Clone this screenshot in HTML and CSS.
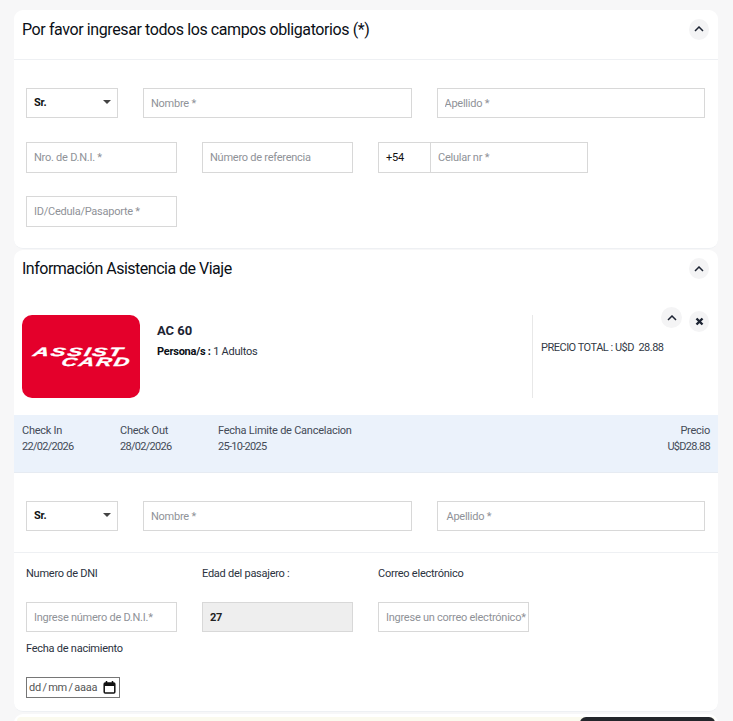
FILE: index.html
```html
<!DOCTYPE html>
<html lang="es">
<head>
<meta charset="utf-8">
<title>Datos del pasajero</title>
<link rel="stylesheet" href="styles.css">
</head>
<body>
<main class="page">
  <section class="card card-first">
    <header class="card-head head-line">
      <h2>Por favor ingresar todos los campos obligatorios (*)</h2>
      <button class="round" type="button" aria-label="Contraer"><svg width="10" height="6" viewBox="0 0 10 6"><path d="M1 5l4-4 4 4" fill="none" stroke="#1d2433" stroke-width="1.5"/></svg></button>
    </header>
    <div class="form">
      <div class="row row-name">
        <div class="select"><span>Sr.</span><i class="caret"></i></div>
        <input class="field" placeholder="Nombre *">
        <input class="field" placeholder="Apellido *">
      </div>
      <div class="row row-three">
        <input class="field tall" placeholder="Nro. de D.N.I. *">
        <input class="field tall" placeholder="Número de referencia">
        <div class="phone">
          <span class="prefix">+54</span>
          <input class="phone-input" placeholder="Celular nr *">
        </div>
      </div>
      <div class="row row-three">
        <input class="field tall" placeholder="ID/Cedula/Pasaporte *">
      </div>
    </div>
  </section>

  <section class="card card-second">
    <header class="card-head">
      <h2>Información Asistencia de Viaje</h2>
      <button class="round" type="button" aria-label="Contraer"><svg width="10" height="6" viewBox="0 0 10 6"><path d="M1 5l4-4 4 4" fill="none" stroke="#1d2433" stroke-width="1.5"/></svg></button>
    </header>
    <div class="product">
      <div class="logo"><span class="logo-a">ASSIST</span><span class="logo-b">CARD</span></div>
      <div class="product-info">
        <h3>AC 60</h3>
        <p><b>Persona/s :</b> 1 Adultos</p>
      </div>
      <div class="product-side">
        <div class="side-actions">
          <button class="round up" type="button" aria-label="Contraer"><svg width="10" height="6" viewBox="0 0 10 6"><path d="M1 5l4-4 4 4" fill="none" stroke="#1d2433" stroke-width="1.5"/></svg></button>
          <button class="round" type="button" aria-label="Quitar"><svg width="9" height="9" viewBox="0 0 9 9"><path d="M1.5 1.5l6 6M7.5 1.5l-6 6" fill="none" stroke="#1d2433" stroke-width="2.4"/></svg></button>
        </div>
        <p class="total">PRECIO TOTAL : U$D &nbsp;28.88</p>
      </div>
    </div>
    <div class="band">
      <div class="band-col col-a"><span>Check In</span><span>22/02/2026</span></div>
      <div class="band-col col-a"><span>Check Out</span><span>28/02/2026</span></div>
      <div class="band-col"><span>Fecha Limite de Cancelacion</span><span>25-10-2025</span></div>
      <div class="band-col col-end"><span>Precio</span><span>U$D28.88</span></div>
    </div>
    <div class="form form-pax">
      <div class="row row-name">
        <div class="select"><span>Sr.</span><i class="caret"></i></div>
        <input class="field" placeholder="Nombre *">
        <input class="field apellido" placeholder="Apellido *">
      </div>
    </div>
    <div class="details">
      <div class="detail-grid">
        <div class="detail"><label>Numero de DNI</label><input class="field" placeholder="Ingrese número de D.N.I.*"></div>
        <div class="detail"><label>Edad del pasajero :</label><input class="field locked" value="27" disabled></div>
        <div class="detail"><label>Correo electrónico</label><input class="field" placeholder="Ingrese un correo electrónico*"></div>
      </div>
      <label class="birth-label">Fecha de nacimiento</label>
      <div class="date"><span>dd / mm / aaaa</span>
        <svg width="13" height="13" viewBox="0 0 13 13"><path d="M3.5 0v2M9.5 0v2" stroke="#111" stroke-width="1.5"/><rect x="1.2" y="2" width="10.6" height="10" rx="1" fill="none" stroke="#111" stroke-width="1.5"/><rect x="1.2" y="2" width="10.6" height="3" fill="#111"/></svg>
      </div>
    </div>
  </section>

  <section class="card card-third">
    <div class="notice"><div class="notice-dark"></div></div>
  </section>
</main>
</body>
</html>
```
FILE: styles.css
```css
* { box-sizing: border-box; }
html, body { margin: 0; height: 721px; overflow: hidden; }
body {
  background: #f7f7f8;
  color: #1d2433;
  font-family: "Roboto", sans-serif;
  font-size: 11px;
  letter-spacing: -0.25px;
}
.page { padding: 10px 15px 0 14px; display: flex; flex-direction: column; gap: 1px; }
.card { background: #fff; border-radius: 9px; border-bottom: 1px solid #eef0f3; }
.card-first { height: 239px; }
.card-second { height: 462px; }
.card-third { height: 30px; margin-top: 1px; padding: 3px 3px 0; }
.card-head { display: flex; justify-content: space-between; align-items: center; padding: 8px 9px 0 8px; }
.card-first .card-head { height: 50px; padding: 0 9px 11px 8px; }
.head-line { border-bottom: 1px solid #eef0f3; }
h2 { margin: 0; font-size: 16px; letter-spacing: -0.4px; font-weight: 400; color: #0b0f16; }
.card-second h2 { letter-spacing: -0.5px; }
.round { width: 20px; height: 21px; border: 0; padding: 0; border-radius: 50%; background: #f4f4f5; display: flex; align-items: center; justify-content: center; }
.form { padding: 28px 13px 0 12px; display: flex; flex-direction: column; gap: 23px; }
.row { display: flex; gap: 25px; }
.row-name { margin-bottom: 1px; }
.row-name .field { flex: 1 1 0; min-width: 0; }
.field { height: 30px; border: 1px solid #d8d8d8; background: #fff; padding: 0 0 0 7px; font: inherit; letter-spacing: inherit; color: #111; outline: 0; border-radius: 0; }
.field::placeholder, .phone-input::placeholder { color: #8f9298; opacity: 1; }
.apellido { text-indent: 2px; }
.tall { height: 31px; width: 151px; }
.select { width: 92px; height: 30px; border: 1px solid #d8d8d8; padding: 0 6px 2px 7px; display: flex; align-items: center; justify-content: space-between; font-weight: 700; color: #111; }
.caret { width: 0; height: 0; border: 4px solid transparent; border-top-color: #444; border-bottom: 0; }
.phone { width: 210px; height: 31px; border: 1px solid #d8d8d8; display: flex; }
.prefix { width: 52px; border-right: 1px solid #d8d8d8; padding: 0 7px; display: flex; align-items: center; color: #111; }
.phone-input { flex: 1; min-width: 0; border: 0; outline: 0; padding: 0 7px; font: inherit; letter-spacing: inherit; }
.product { display: flex; align-items: flex-start; padding: 36px 9px 0 8px; height: 136px; }
.logo { width: 118px; height: 83px; border-radius: 10px; background: #e4002b; color: #fff; display: flex; flex-direction: column; align-items: center; justify-content: center; font-family: "Liberation Sans", sans-serif; font-weight: 700; font-style: italic; font-size: 12px; line-height: 10px; letter-spacing: 1px; -webkit-text-stroke: 0.3px #fff; }
.logo-a { transform: skewX(-12deg) scaleX(1.85); margin-left: -5px; }
.logo-b { transform: skewX(-12deg) scaleX(1.8); margin-left: 30px; }
.product-info { width: 392px; padding: 8px 0 0 17px; }
h3 { margin: 0; font-size: 13px; letter-spacing: 0; font-weight: 700; color: #1d2433; }
.product-info p { margin: 7px 0 0; color: #2b3240; }
.product-info b { color: #0b0f16; }
.product-side { flex: 1; height: 83px; border-left: 1px solid #e8e8e8; padding-left: 8px; }
.side-actions { display: flex; justify-content: flex-end; gap: 7px; margin-top: -8px; align-items: flex-start; }
.side-actions .round { margin-top: 4px; }
.side-actions .up { margin-top: 0; width: 21px; }
.total { margin: 9px 0 0; color: #333a46; letter-spacing: -0.5px; }
.band { display: flex; height: 58px; background: #ebf2fb; padding: 10px 8px 0; border-bottom: 1px solid #e6ebf2; }
.band-col { display: flex; flex-direction: column; gap: 4px; line-height: 12px; color: #444b57; }
.band-col span:last-child { letter-spacing: -0.7px; }
.col-a { width: 98px; }
.col-end { margin-left: auto; text-align: right; }
.form-pax { padding-top: 28px; height: 80px; border-bottom: 1px solid #eef0f3; }
.details { padding: 14px 12px 0; }
.detail-grid { display: flex; gap: 25px; }
.detail { width: 151px; display: flex; flex-direction: column; gap: 21px; }
.detail .field { width: 151px; }
label { line-height: 14px; color: #2b3240; }
.locked { background: #eee; font-weight: 700; color: #222; }
.birth-label { display: block; margin-top: 10px; }
.date { width: 94px; height: 21px; margin-top: 21px; border: 1px solid #767676; display: flex; align-items: center; justify-content: space-between; padding: 0 3px 0 2px; color: #555; white-space: nowrap; word-spacing: -1px; }
.date svg { flex-shrink: 0; }
.notice { height: 30px; background: #fbfaee; border-radius: 4px; display: flex; justify-content: flex-end; }
.notice-dark { width: 135px; height: 30px; background: #23262b; border-radius: 6px 6px 0 0; }
```
